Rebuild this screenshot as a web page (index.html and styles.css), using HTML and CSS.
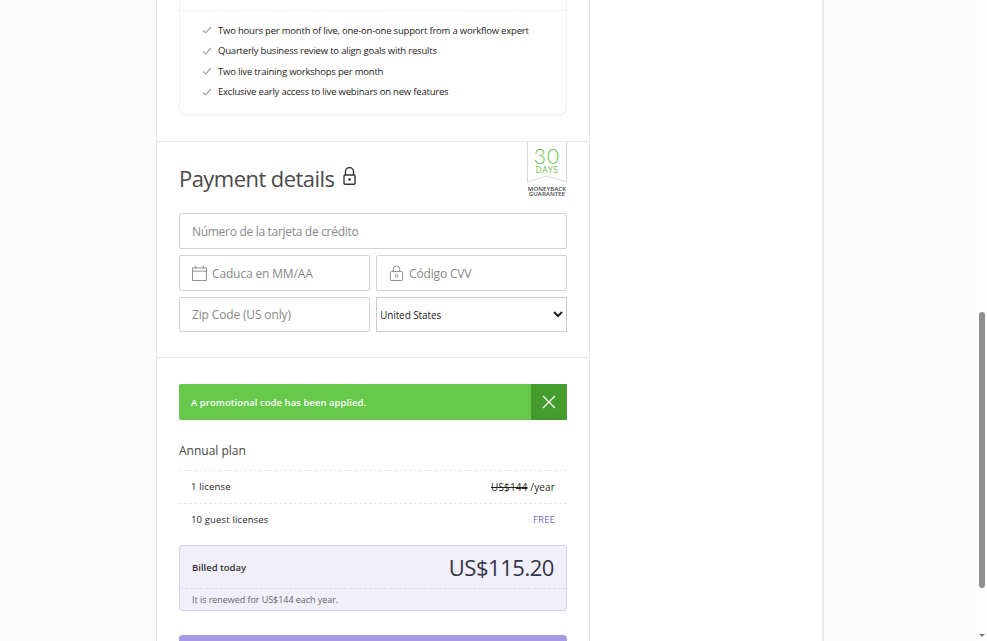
FILE: index.html
```html
<!DOCTYPE html>
<html lang="en">
<head>
    <meta charset="UTF-8">
    <meta name="viewport" content="width=device-width, initial-scale=1.0">
    <title>Checkout</title>
    <link rel="stylesheet" href="styles.css">
</head>
<body>

<div class="page">
    <div class="card">
        <main class="checkout">

            <section class="section plan-section">
                <div class="plan-box">
                    <div class="plan-head"></div>
                    <ul class="features">
                        <li><svg class="check" viewBox="0 0 10 8"><path d="M1 4.4 3.6 7 9 1"/></svg>Two hours per month of live, one-on-one support from a workflow expert</li>
                        <li><svg class="check" viewBox="0 0 10 8"><path d="M1 4.4 3.6 7 9 1"/></svg>Quarterly business review to align goals with results</li>
                        <li><svg class="check" viewBox="0 0 10 8"><path d="M1 4.4 3.6 7 9 1"/></svg>Two live training workshops per month</li>
                        <li><svg class="check" viewBox="0 0 10 8"><path d="M1 4.4 3.6 7 9 1"/></svg>Exclusive early access to live webinars on new features</li>
                    </ul>
                </div>
            </section>

            <section class="section payment-section">
                <div class="payment-head">
                    <h2>Payment details
                        <svg class="lock" viewBox="0 0 13 18"><path d="M2.500 8V4.500a4 4 0 0 1 8 0V8"/><rect x="1" y="8" width="11" height="9.300" rx="1"/><circle class="lock-dot" cx="6.500" cy="12.500" r="1.300"/></svg>
                    </h2>
                    <div class="badge">
                        <div class="ribbon">
                            <svg class="ribbon-shape" viewBox="0 0 40 41"><path d="M.5 0v40L20 34l19.500 6V0"/></svg>
                            <span class="ribbon-num">30</span>
                            <span class="ribbon-days">DAYS</span>
                        </div>
                        <div class="badge-text">MONEYBACK<br>GUARANTEE</div>
                    </div>
                </div>

                <div class="form">
                    <div class="field field-wide"><input type="text" placeholder="Número de la tarjeta de crédito"></div>
                    <div class="field">
                        <svg class="field-icon" viewBox="0 0 16 17"><path d="M.5 3h15v13.500H.5zM.5 6.500h15M4 .5V4M12 .5V4"/></svg>
                        <input type="text" placeholder="Caduca en MM/AA">
                    </div>
                    <div class="field">
                        <svg class="field-icon" viewBox="0 0 16 17"><path d="M4.500 7V4.500a3.500 3.500 0 0 1 7 0V7"/><rect x="1.500" y="7" width="13" height="9.500" rx="1"/><circle cx="8" cy="11.500" r="1.500"/></svg>
                        <input type="text" placeholder="Código CVV">
                    </div>
                    <div class="field"><input type="text" placeholder="Zip Code (US only)"></div>
                    <select class="country">
                        <option>United States</option>
                    </select>
                </div>
            </section>

            <section class="section summary-section">
                <div class="promo">
                    <span class="promo-text">A promotional code has been applied.</span>
                    <span class="promo-close"><svg viewBox="0 0 14 14"><path d="M1 1l12 12M13 1 1 13"/></svg></span>
                </div>

                <h3>Annual plan</h3>

                <div class="line-item">
                    <span>1 license</span>
                    <span class="price"><s>US$144</s> /year</span>
                </div>
                <div class="line-item">
                    <span>10 guest licenses</span>
                    <span class="free">FREE</span>
                </div>

                <div class="total">
                    <div class="total-main">
                        <span class="total-label">Billed today</span>
                        <span class="total-amount">US$115.20</span>
                    </div>
                    <div class="total-note">It is renewed for US$144 each year.</div>
                </div>

                <div class="pay-button"></div>
            </section>

        </main>
    </div>
</div>

<!-- barra de scroll del navegador -->
<div class="scrollbar">
    <div class="scroll-thumb"></div>
    <div class="scroll-arrow"></div>
</div>

</body>
</html>
```

FILE: styles.css
```css
html, body {
    height: 100%;
    overflow: hidden;
}

body {
    font-family: "Open Sans", "Noto Sans", sans-serif;
    margin: 0;
    padding: 0;
    background-color: #fbfbfb;
    color: #333;
}

.page {
    padding-left: 156px;
}

.card {
    width: 665px;
    height: 641px;
    background-color: white;
    border-left: 1px solid #e9e9e9;
    border-right: 2px solid #e9e9e9;
}

.checkout {
    width: 432px;
    height: 100%;
    border-right: 1px solid #e6e6e6;
}

.section {
    padding: 0 22px;
    border-bottom: 1px solid #e6e6e6;
}

/* bloque del plan */
.plan-section {
    height: 141px;
}

.plan-box {
    height: 114px;
    border: 1px solid #f0f0f0;
    border-top: none;
    border-radius: 0 0 8px 8px;
    box-shadow: 0 1px 3px rgba(0, 0, 0, 0.04);
}

.plan-head {
    height: 10px;
    border-bottom: 1px solid #f0f0f0;
}

.features {
    list-style: none;
    margin: 0;
    padding: 9px 0 0 22px;
}

.features li {
    display: flex;
    align-items: center;
    height: 20.5px;
    font-size: 9.5px;
    letter-spacing: -0.2px;
    color: #222;
}

.check {
    width: 10px;
    height: 8px;
    margin-right: 6px;
    fill: none;
    stroke: #a3a3a3;
    stroke-width: 1.2;
}

/* datos de pago */
.payment-section {
    height: 215px;
}

.payment-head {
    display: flex;
    justify-content: space-between;
    height: 71px;
}

.payment-head h2 {
    display: flex;
    align-items: flex-start;
    margin: 21px 0 0;
    font-size: 22px;
    font-weight: 400;
    line-height: 30px;
    letter-spacing: -0.55px;
    color: #4a4a4a;
}

.lock {
    width: 13px;
    height: 18px;
    margin: 4px 0 0 9px;
    fill: none;
    stroke: #333;
    stroke-width: 1.4;
}

.lock-dot {
    fill: #333;
    stroke: none;
}

.badge {
    width: 40px;
    text-align: center;
}

.ribbon {
    position: relative;
    height: 41px;
    padding-top: 4px;
    box-sizing: border-box;
    color: #6cc04a;
}

.ribbon-shape {
    position: absolute;
    top: 0;
    left: 0;
    width: 40px;
    height: 41px;
    fill: none;
    stroke: #d5d9d2;
}

.ribbon-num {
    display: block;
    font-family: Lato, "Open Sans", sans-serif;
    font-size: 21px;
    font-weight: 300;
    line-height: 19px;
    letter-spacing: 1px;
}

.ribbon-days {
    display: block;
    font-size: 8.5px;
    font-weight: 500;
    line-height: 9px;
    letter-spacing: 0.5px;
}

.badge-text {
    margin-top: 4px;
    font-size: 6px;
    font-weight: 600;
    line-height: 5px;
    letter-spacing: 0.1px;
    color: #444;
    white-space: nowrap;
}

.form {
    display: grid;
    grid-template-columns: 191px 191px;
    grid-template-rows: 36px 35.5px 35.5px;
    gap: 6px;
}

.field {
    display: flex;
    align-items: center;
    padding: 0 12px;
    border: 1px solid #d2d2d2;
    border-radius: 2px;
    background-color: white;
    box-sizing: border-box;
}

.field-wide {
    grid-column: 1 / 3;
}

.field input {
    flex: 1;
    min-width: 0;
    border: none;
    outline: none;
    padding: 1px 0 0;
    font-family: inherit;
    font-size: 12px;
    letter-spacing: -0.15px;
    background: transparent;
}

.field-wide input {
    padding-top: 0;
    letter-spacing: -0.3px;
}

.field input::placeholder {
    color: #888;
    opacity: 1;
}

.field-icon {
    flex: none;
    width: 15px;
    height: 16px;
    margin-right: 5px;
    fill: none;
    stroke: #8a8a8a;
}

.country {
    width: 191px;
    height: 100%;
    padding: 1px 0 0;
    border: 1px solid #cbcbcb;
    border-radius: 0;
    background-color: white;
    font-family: inherit;
    font-size: 10px;
    letter-spacing: -0.1px;
    text-indent: -1px;
    color: #222;
}

/* resumen */
.summary-section {
    border-bottom: none;
    padding-top: 26px;
}

.promo {
    display: flex;
    justify-content: space-between;
    align-items: center;
    height: 36px;
    background-color: #66c94c;
    border-radius: 2px;
    color: white;
    font-size: 9.5px;
    font-weight: 600;
    letter-spacing: 0.05px;
}

.promo-text {
    padding-left: 12px;
}

.promo-close {
    display: flex;
    align-items: center;
    justify-content: center;
    width: 36px;
    height: 36px;
    background-color: #439c2c;
}

.promo-close svg {
    width: 14px;
    height: 14px;
    fill: none;
    stroke: white;
    stroke-width: 1.3;
}

.summary-section h3 {
    margin: 22px 0 10px;
    font-size: 12px;
    font-weight: 400;
    line-height: 18px;
    color: #444;
}

.line-item {
    display: flex;
    justify-content: space-between;
    align-items: center;
    height: 33px;
    box-sizing: border-box;
    padding: 0 12px 1px;
    border-top: 1px dashed #e6e6e6;
    font-size: 9.5px;
    font-weight: 500;
    letter-spacing: 0.15px;
    color: #1f1f1f;
}

.price {
    font-size: 10px;
    font-weight: 400;
}

.free {
    color: #7a68c4;
}

.total {
    margin-top: 9px;
    border: 1px solid #d6d1ec;
    border-radius: 3px;
    background-color: #f1effc;
}

.total-main {
    display: flex;
    justify-content: space-between;
    align-items: center;
    height: 43px;
    box-sizing: border-box;
    padding: 0 12px;
    border-bottom: 1px dashed #dedaf0;
}

.total-label {
    font-size: 9.5px;
    font-weight: 600;
    color: #333;
}

.total-amount {
    font-size: 22px;
    letter-spacing: -0.45px;
    color: #343446;
}

.total-note {
    height: 21px;
    padding-left: 12px;
    font-size: 9px;
    line-height: 21px;
    letter-spacing: -0.05px;
    color: #666;
}

.pay-button {
    height: 40px;
    margin-top: 24px;
    background-color: #a99ae6;
    border-radius: 4px;
}

/* scrollbar */
.scrollbar {
    position: fixed;
    top: 0;
    right: 0;
    width: 11px;
    height: 641px;
    background-color: #fefefe;
}

.scroll-thumb {
    position: absolute;
    top: 312px;
    left: 3px;
    width: 6px;
    height: 276px;
    border-radius: 3px;
    background-color: #8f8f8f;
}

.scroll-arrow {
    position: absolute;
    top: 634px;
    left: 3px;
    border-left: 3px solid transparent;
    border-right: 3px solid transparent;
    border-top: 3px solid #7a7a7a;
}
```
